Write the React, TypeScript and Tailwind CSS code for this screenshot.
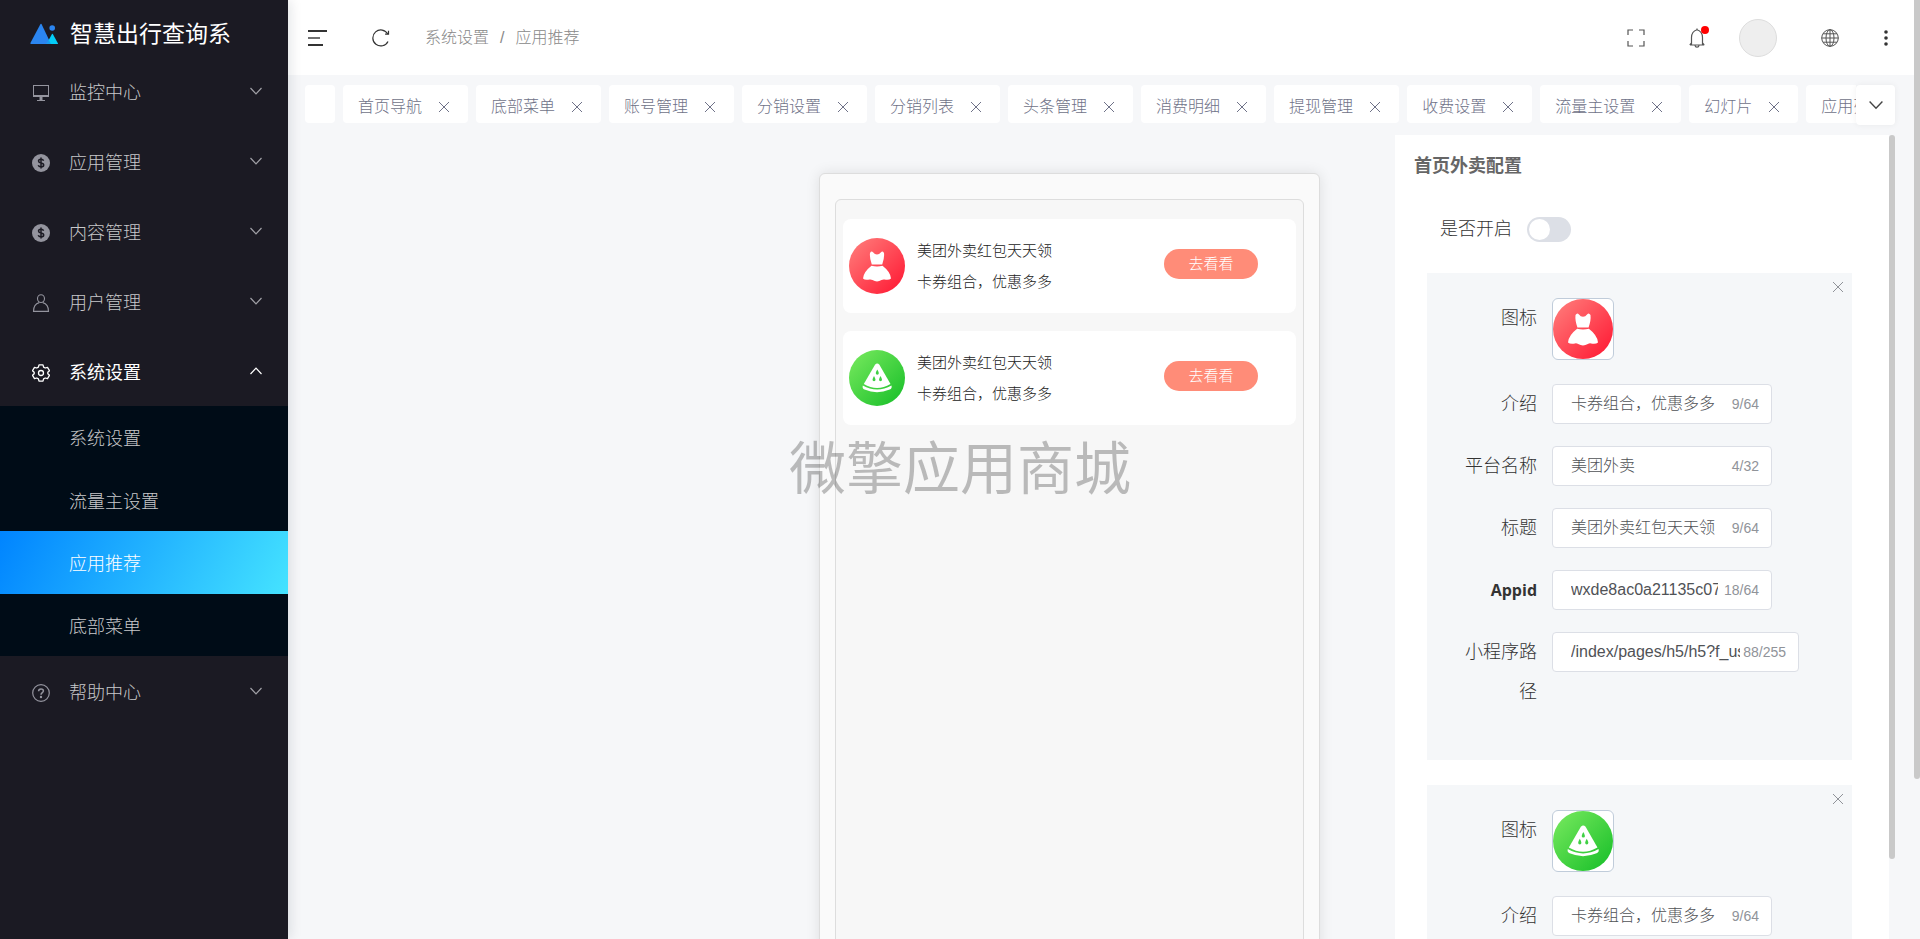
import { useState, type ReactNode } from "react";

type IconProps = { className?: string };

interface MenuEntry {
  label: string;
  icon: (props: IconProps) => ReactNode;
  children?: string[];
}

function MonitorIcon({ className }: IconProps) {
  return (
    <svg viewBox="0 0 18 18" className={className} fill="none" stroke="currentColor">
      <rect x="1.500" y="1.500" width="15" height="11" strokeWidth="1" />
      <path d="M1 12h16" strokeWidth="2" />
      <path d="M9 13v3" strokeWidth="3" />
      <path d="M5 16.500h8" strokeWidth="1" />
    </svg>
  );
}

function CoinIcon({ className }: IconProps) {
  return (
    <svg viewBox="0 0 18 18" className={className}>
      <circle cx="9" cy="9" r="9" fill="currentColor" />
      <path
        d="M11.600 6.800C11.200 5.600 10.200 5.200 9 5.200c-1.500 0-2.500.7-2.500 1.800 0 2.700 5.200 1.200 5.200 4 0 1.200-1.100 1.900-2.700 1.900-1.400 0-2.400-.5-2.800-1.600M9 3.600v10.800"
        fill="none"
        stroke="#1b1a23"
        strokeWidth="1.500"
      />
    </svg>
  );
}

function UserIcon({ className }: IconProps) {
  return (
    <svg viewBox="0 0 18 18" className={className} fill="none" stroke="currentColor" strokeWidth="1.100">
      <ellipse cx="9" cy="4.600" rx="3.500" ry="3.900" />
      <path d="M7.200 8.600C3.500 9.600 1.500 12 1.500 17.400h15c0-5.400-2-7.800-5.700-8.800" />
    </svg>
  );
}

function GearIcon({ className }: IconProps) {
  return (
    <svg viewBox="0 0 18 18" className={className} fill="none" stroke="currentColor" strokeWidth="1.300" strokeLinejoin="round">
      <path d="M7 .8h4l.6 2.300 1.600.9 2.300-.7 2 3.400L15.800 8.300v1.400l1.700 1.600-2 3.400-2.300-.7-1.600.9-.6 2.300H7l-.6-2.300-1.600-.9-2.300.7-2-3.400 1.700-1.600V8.300L.5 6.700l2-3.400 2.300.7 1.600-.9z" />
      <circle cx="9" cy="9" r="2.500" />
    </svg>
  );
}

function HelpIcon({ className }: IconProps) {
  return (
    <svg viewBox="0 0 18 18" className={className} fill="none" stroke="currentColor" strokeWidth="1.200">
      <circle cx="9" cy="9" r="8.300" />
      <path d="M6.600 7.200c0-1.400 1-2.300 2.400-2.300s2.400.8 2.400 2.100c0 1.600-2.400 1.700-2.400 3.800" strokeWidth="1.500" />
      <circle cx="9" cy="13" r=".6" fill="currentColor" />
    </svg>
  );
}

function ChevronIcon({ className }: IconProps) {
  return (
    <svg viewBox="0 0 12 8" className={className} fill="none" stroke="currentColor" strokeWidth="1.200">
      <path d="M.5 1 6 6.800 11.500 1" />
    </svg>
  );
}

function CloseIcon({ className }: IconProps) {
  return (
    <svg viewBox="0 0 12 12" className={className} fill="none" stroke="currentColor" strokeWidth="1">
      <path d="m1 1 10 10M11 1 1 11" />
    </svg>
  );
}

function LogoIcon({ className }: IconProps) {
  return (
    <svg viewBox="0 0 28 22" className={className}>
      <path d="M10.500 1Q11 .6 11.500 1L21 21H1q-.8 0-.6-.9z" fill="#2b85f0" />
      <path d="M22 11q.4-.4.800 0L28 20.500q0 .5-.5.500H16.500z" fill="#04cdf8" />
      <path d="m18.600 16.500 2.300 4.500h-4.600z" fill="#1a9af0" />
      <circle cx="22.200" cy="5" r="2.800" fill="#2b85f0" />
    </svg>
  );
}

function DressIcon({ className }: IconProps) {
  return (
    <svg viewBox="0 0 56 56" className={className}>
      <defs>
        <linearGradient id="dress" x1="0" y1="0" x2="1" y2="1">
          <stop offset=".1" stopColor="#ff7676" />
          <stop offset=".9" stopColor="#ff1f38" />
        </linearGradient>
      </defs>
      <circle cx="28" cy="28" r="28" fill="url(#dress)" />
      <g fill="#fff">
        <path d="M21 15q1.500-2.400 3-.8 1.800 2.400 4 2.400t4-2.400q1.500-1.600 3 .8.600 5-1.800 11.500H22.800Q20.400 20 21 15z" />
        <path d="M22.500 27.800q5.500 1.200 11 0Q41.500 34 42 40.500q-2 2-6.500 1-1.500-.4-3 .6-4.500 2.600-9 0-1.500-1-3-.6-4.500 1-6.500-1 .5-6.500 8.500-12.700z" />
      </g>
    </svg>
  );
}

function MelonIcon({ className }: IconProps) {
  return (
    <svg viewBox="0 0 56 56" className={className}>
      <defs>
        <linearGradient id="melon" x1="0" y1="0" x2="1" y2="1">
          <stop offset=".1" stopColor="#70e65a" />
          <stop offset=".9" stopColor="#1fc22d" />
        </linearGradient>
      </defs>
      <circle cx="28" cy="28" r="28" fill="url(#melon)" />
      <g fill="#fff">
        <path d="M26 14.800q2.200-2.600 4.400 0L41.500 34Q28 42 14.800 34z" />
        <path d="M13.800 35.500Q28 43.600 42.500 35.500q.8 3-1.800 4Q28 44.800 15.500 39.500q-2.500-1-1.700-4z" />
      </g>
      <g fill="#3fd044">
        <path d="M28.300 19.500q3 5 0 5.200-3-.2 0-5.200z" />
        <path d="M25 26q3 5 0 5.200-3-.2 0-5.200z" />
        <path d="M31.500 26q3 5 0 5.200-3-.2 0-5.200z" />
      </g>
    </svg>
  );
}

const MENU: MenuEntry[] = [
  { label: "监控中心", icon: MonitorIcon },
  { label: "应用管理", icon: CoinIcon },
  { label: "内容管理", icon: CoinIcon },
  { label: "用户管理", icon: UserIcon },
  { label: "系统设置", icon: GearIcon, children: ["系统设置", "流量主设置", "应用推荐", "底部菜单"] },
  { label: "帮助中心", icon: HelpIcon },
];

const TABS = [
  "首页导航",
  "底部菜单",
  "账号管理",
  "分销设置",
  "分销列表",
  "头条管理",
  "消费明细",
  "提现管理",
  "收费设置",
  "流量主设置",
  "幻灯片",
  "应用列表",
];

const ITEMS = [
  {
    id: "dress",
    icon: DressIcon,
    intro: "卡券组合，优惠多多",
    platform: "美团外卖",
    title: "美团外卖红包天天领",
    appid: "wxde8ac0a21135c07d",
    path: "/index/pages/h5/h5?f_userId=0",
  },
  {
    id: "melon",
    icon: MelonIcon,
    intro: "卡券组合，优惠多多",
    platform: "美团外卖",
    title: "美团外卖红包天天领",
    appid: "wxde8ac0a21135c07d",
    path: "/index/pages/h5/h5?f_userId=0",
  },
];

function Sidebar() {
  return (
    <aside className="z-10 flex w-72 shrink-0 flex-col bg-[#1b1a23] shadow-[2px_0_12px_rgba(0,21,41,.12)]">
      <div className="flex h-14 shrink-0 items-center gap-3 pl-[30px] pt-3">
        <LogoIcon className="h-[22px] w-7" />
        <h1 className="text-[23px] leading-8 font-normal text-white">智慧出行查询系</h1>
      </div>
      <nav>
        {MENU.map(({ label, icon: Icon, children }) => (
          <div key={label}>
            <button
              className={`flex h-[70px] w-full items-center pl-8 pr-[26px] pt-1 text-lg ${
                children ? "font-normal text-white" : "text-[#c8c8ca]"
              }`}
            >
              <Icon className={`size-[18px] ${children ? "" : "text-[#94949e]"}`} />
              <span className="ml-[19px]">{label}</span>
              <ChevronIcon className={`mb-1 ml-auto h-2 w-3 ${children ? "rotate-180" : "text-[#a0a0a6]"}`} />
            </button>
            {children && (
              <div className="grid h-[250px] grid-rows-4 bg-[#000c17]">
                {children.map((child) => (
                  <a
                    key={child}
                    href="#"
                    className={`flex items-center pl-[69px] pt-1 text-lg ${
                      child === "应用推荐"
                        ? "bg-[linear-gradient(118deg,#0084ff,#45e3ff)] text-white"
                        : "text-[#c8c8ca]"
                    }`}
                  >
                    {child}
                  </a>
                ))}
              </div>
            )}
          </div>
        ))}
      </nav>
    </aside>
  );
}

function Header() {
  return (
    <header className="flex h-[75px] shrink-0 items-center bg-white pl-5 pr-[25px] text-[#333]">
      <button aria-label="收起菜单">
        <svg viewBox="0 0 19 16" className="h-4 w-[19px]" fill="none" stroke="currentColor" strokeWidth="2">
          <path d="M0 1h19M0 15h15" />
          <path d="M0 8h12" strokeWidth="1.400" />
        </svg>
      </button>
      <button aria-label="刷新" className="ml-[45px]">
        <svg viewBox="0 0 18 18" className="size-[18px]" fill="none" stroke="currentColor" strokeWidth="1.200">
          <path d="M15.800 5A8 8 0 1 0 16 12.500" />
          <path d="M16.500 1.800V5.200h-3.400" />
        </svg>
      </button>
      <nav aria-label="面包屑" className="ml-[35px] flex text-base text-[#888]">
        <a href="#">系统设置</a>
        <span className="mx-[11px]">/</span>
        <span>应用推荐</span>
      </nav>
      <div className="ml-auto flex items-center text-[#555]">
        <button aria-label="全屏">
          <svg viewBox="0 0 18 18" className="size-[18px]" fill="none" stroke="currentColor" strokeWidth="1.200">
            <path d="M1 6V1h5M12 1h5v5M17 12v5h-5M6 17H1v-5" />
          </svg>
        </button>
        <button aria-label="通知" className="relative ml-11">
          <svg viewBox="0 0 16 20" className="h-5 w-4" fill="none" stroke="currentColor" strokeWidth="1.200">
            <path d="M8 .5v1.700M.8 17h14.400M2.500 16.800V9.500Q2.600 3.500 8 1.800q5.400 1.700 5.500 7.700v7.300M.8 17l1.700-2M15.200 17l-1.700-2M6 17.500c.3 2.200 3.700 2.200 4 0" />
          </svg>
          <span className="absolute -right-1 -top-0.5 size-2 rounded-full bg-[#f00]" />
        </button>
        <span className="ml-[34px] size-[38px] rounded-full border border-[#ddd] bg-[#eee]" />
        <button aria-label="语言" className="ml-11">
          <svg viewBox="0 0 18 18" className="size-[18px]" fill="none" stroke="currentColor" strokeWidth="1">
            <circle cx="9" cy="9" r="8.300" />
            <ellipse cx="9" cy="9" rx="4" ry="8.300" />
            <path d="M9 .7v16.600M.7 9h16.600M2 4.800h14M2 13.200h14" />
          </svg>
        </button>
        <button aria-label="更多" className="ml-11">
          <svg viewBox="0 0 6 16" className="h-4 w-1.5" fill="#333">
            <circle cx="3" cy="2" r="1.800" />
            <circle cx="3" cy="8" r="1.800" />
            <circle cx="3" cy="14" r="1.800" />
          </svg>
        </button>
      </div>
    </header>
  );
}

function TabBar() {
  return (
    <div className="relative flex shrink-0 gap-2 overflow-hidden py-2.5 pl-[17px] text-base text-[#6f7288]">
      <div className="h-[38px] w-[30px] shrink-0 rounded bg-white" />
      {TABS.map((tab) => (
        <div key={tab} className="flex h-[38px] shrink-0 items-center rounded bg-white pl-[15px] pr-[18px] pt-1.5">
          <a href="#">{tab}</a>
          <button aria-label={`关闭${tab}`} className="ml-4">
            <CloseIcon className="size-3" />
          </button>
        </div>
      ))}
      <div className="absolute inset-y-0 right-0 w-[58px] bg-[#f6f7f9]" />
      <button
        aria-label="更多标签"
        className="absolute right-[19px] top-2.5 flex h-10 w-[39px] items-center justify-center rounded bg-white text-[#444] shadow-[0_0_6px_rgba(0,0,0,.06)]"
      >
        <ChevronIcon className="h-2.5 w-3.5" />
      </button>
    </div>
  );
}

function PhonePreview() {
  return (
    <div className="-mb-4 flex min-w-0 flex-1 justify-end pr-[75px] pt-[38px]">
      <div className="w-[501px] rounded-md border border-[#ddd] bg-[#fafafa] px-[15px] pt-[25px] shadow-[0_0_14px_rgba(0,0,0,.1)]">
        <div className="flex h-full flex-col gap-[18px] rounded-md border border-[#ddd] bg-[#f7f7f7] px-[7px] pt-[19px]">
          {ITEMS.map(({ id, icon: Icon, title, intro }) => (
            <div key={id} className="flex h-[94px] items-center rounded-lg bg-white pl-1.5 pr-[38px] text-[15px] text-[#222]">
              <Icon className="size-14" />
              <div className="ml-3 leading-[31px]">
                <p>{title}</p>
                <p>{intro}</p>
              </div>
              <button className="mb-1 ml-auto h-[30px] w-[94px] rounded-full bg-[#ff8c78] text-white">去看看</button>
            </div>
          ))}
        </div>
      </div>
    </div>
  );
}

interface FieldProps {
  id: string;
  label: string;
  value: string;
  count: string;
  wide?: boolean;
}

function Field({ id, label, value, count, wide }: FieldProps) {
  const [text, setText] = useState(value);
  const latin = /^[a-z]+$/i.test(label);

  return (
    <div className="flex">
      <label
        htmlFor={id}
        className={`mr-[15px] w-[74px] shrink-0 text-right leading-10 text-[#333] ${
          latin ? "font-['Open_Sans',sans-serif] text-base leading-10 font-bold" : "text-lg leading-10"
        }`}
      >
        {label}
      </label>
      <div
        className={`flex h-10 items-center rounded border border-[#dcdfe6] bg-white pl-[18px] pr-3 ${
          wide ? "w-[247px]" : "w-[220px]"
        }`}
      >
        <input
          id={id}
          value={text}
          onChange={(e) => setText(e.target.value)}
          className={`min-w-0 text-base text-[#505256] outline-none ${wide ? "w-[169px]" : "w-[147px]"}`}
        />
        <span className="ml-auto text-sm text-[#909399]">{count}</span>
      </div>
    </div>
  );
}

function ConfigPanel() {
  const [enabled, setEnabled] = useState(false);

  return (
    <section className="flex w-[500px] shrink-0">
      <div className="flex-1 overflow-y-auto bg-white [scrollbar-width:none]">
        <h2 className="pl-[19px] pt-4 text-lg leading-[30px] font-bold text-[#666]">首页外卖配置</h2>
        <label className="ml-[45px] mt-8 flex h-8 items-center gap-[15px] text-lg text-[#333]">
          是否开启
          <input
            type="checkbox"
            role="switch"
            checked={enabled}
            onChange={(e) => setEnabled(e.target.checked)}
            className="h-[25px] w-11 appearance-none rounded-full bg-[#dcdfe6] before:ml-0.5 before:mt-0.5 before:block before:size-[21px] before:rounded-full before:bg-white checked:bg-[#409eff] checked:before:ml-[21px]"
          />
        </label>
        <div className="ml-8 mr-[37px] mt-7 flex flex-col gap-[25px]">
          {ITEMS.map(({ id, icon: Icon, ...item }) => (
            <div key={id} className="relative flex flex-col gap-[22px] bg-[#f5f7f9] pb-12 pl-9 pt-[25px]">
              <button aria-label="删除" className="absolute right-2 top-2 text-[#909399]">
                <CloseIcon className="size-3" />
              </button>
              <div className="flex h-16">
                <span className="mr-[15px] w-[74px] text-right text-lg leading-10 text-[#333]">图标</span>
                <button aria-label="上传图标" className="size-[62px] overflow-hidden rounded-md border border-[#c0ccda] bg-white">
                  <Icon className="size-[60px]" />
                </button>
              </div>
              <Field id={`${id}-intro`} label="介绍" value={item.intro} count="9/64" />
              <Field id={`${id}-platform`} label="平台名称" value={item.platform} count="4/32" />
              <Field id={`${id}-title`} label="标题" value={item.title} count="9/64" />
              <Field id={`${id}-appid`} label="Appid" value={item.appid} count="18/64" />
              <Field id={`${id}-path`} label="小程序路径" value={item.path} count="88/255" wide />
            </div>
          ))}
        </div>
      </div>
      <div className="w-1.5">
        <div className="h-[90%] rounded-full bg-[#c9c9c9]" />
      </div>
    </section>
  );
}

export default function App() {
  return (
    <div className="flex h-screen overflow-hidden bg-[#f6f7f9] font-['Liberation_Sans','Noto_Sans_CJK_SC',sans-serif] font-light">
      <Sidebar />
      <div className="flex min-w-0 flex-1 flex-col">
        <Header />
        <TabBar />
        <main className="mt-0.5 flex min-h-0 flex-1 pr-[19px]">
          <PhonePreview />
          <ConfigPanel />
        </main>
      </div>
      <div className="w-1.5 shrink-0">
        <div className="h-[83%] rounded-b-full bg-[#c9c9c9]" />
      </div>
      <div className="pointer-events-none fixed inset-0 z-20 flex items-center justify-center text-[57px] font-normal text-black/25">
        微擎应用商城
      </div>
    </div>
  );
}
